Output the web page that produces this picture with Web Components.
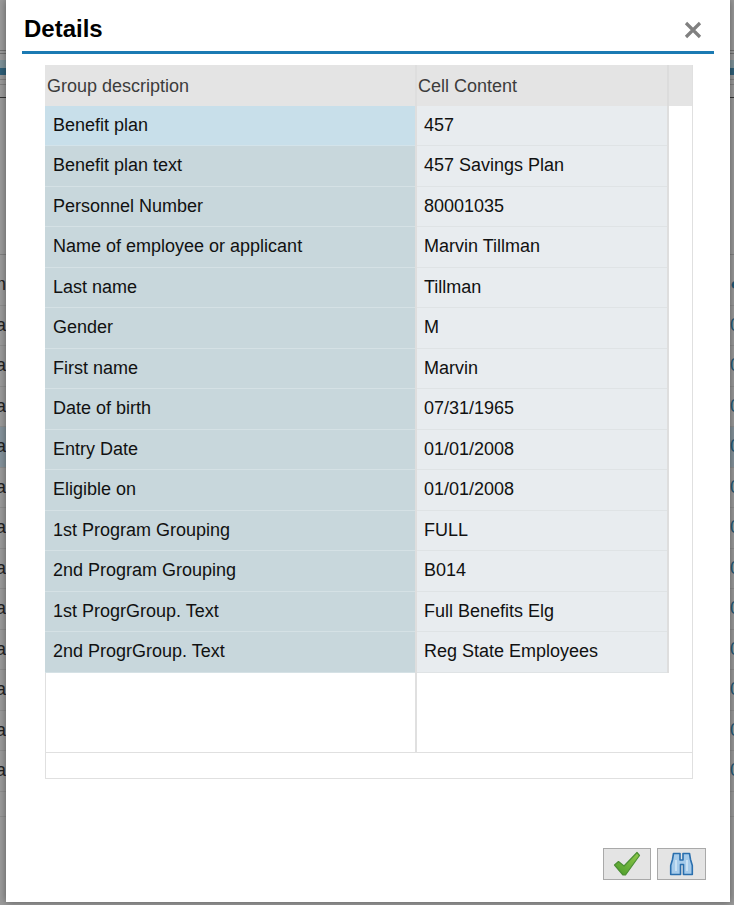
<!DOCTYPE html>
<html lang="en">
<head>
<meta charset="utf-8">
<title>Details</title>
<style>
  html, body {
    margin: 0;
    height: 905px;
    overflow: hidden;
    font-family: "Liberation Sans", Arial, sans-serif;
  }
</style>
</head>
<body>
<page-backdrop></page-backdrop>
<details-dialog heading="Details">
  <detail-table first="Group description" second="Cell Content">
    <detail-row label="Benefit plan" value="457" selected></detail-row>
    <detail-row label="Benefit plan text" value="457 Savings Plan"></detail-row>
    <detail-row label="Personnel Number" value="80001035"></detail-row>
    <detail-row label="Name of employee or applicant" value="Marvin Tillman"></detail-row>
    <detail-row label="Last name" value="Tillman"></detail-row>
    <detail-row label="Gender" value="M"></detail-row>
    <detail-row label="First name" value="Marvin"></detail-row>
    <detail-row label="Date of birth" value="07/31/1965"></detail-row>
    <detail-row label="Entry Date" value="01/01/2008"></detail-row>
    <detail-row label="Eligible on" value="01/01/2008"></detail-row>
    <detail-row label="1st Program Grouping" value="FULL"></detail-row>
    <detail-row label="2nd Program Grouping" value="B014"></detail-row>
    <detail-row label="1st ProgrGroup. Text" value="Full Benefits Elg"></detail-row>
    <detail-row label="2nd ProgrGroup. Text" value="Reg State Employees"></detail-row>
  </detail-table>
  <icon-button slot="actions" kind="check" title="OK"></icon-button>
  <icon-button slot="actions" kind="find" title="Find"></icon-button>
</details-dialog>

<script>
  // dimmed application behind the dialog, only its edges stay visible
  class PageBackdrop extends HTMLElement {
    constructor() {
      super();
      const shadowRoot = this.attachShadow({ mode: "open" });
      const letters = ["m", "a", "a", "a", "a", "a", "a", "a", "a", "a", "a", "a", "a"];
      const rows = letters.map((letter, i) => `
        <div class="row${i === 4 ? " row--active" : ""}">
          <span class="left">${letter}</span>
          <span class="right">${i === 0 ? "●" : "0"}</span>
        </div>`).join("");
      shadowRoot.innerHTML = `
      <style>
        :host {
          display: block;
          height: 905px;
          background: #9a9a9a;
          overflow: hidden;
        }
        .toolbar { height: 50px; }
        .line { height: 1px; background: #6f6f6f; margin-bottom: 2px; }
        .band { height: 8px; background: #7e9299; }
        .band--dark { height: 7px; background: #2f5f78; }
        .gap { height: 4px; }
        .thin { height: 1px; background: #808080; margin-bottom: 4px; }
        .black { height: 1px; background: #333; margin: 12px 0 156px; }
        .row {
          height: 40.5px;
          box-sizing: border-box;
          border-bottom: 1px solid #8d8d8d;
          display: flex;
          align-items: center;
          justify-content: space-between;
          font-size: 18px;
          color: #222;
        }
        .row--active { background: #84929b; }
        .row--end { height: 25px; }
        .left {
          width: 6px;
          display: flex;
          justify-content: flex-end;
          overflow: hidden;
        }
        .right {
          width: 4px;
          overflow: hidden;
          color: #1f5875;
        }
      </style>
      <div class="toolbar"></div>
      <div class="line"></div>
      <div class="line"></div>
      <div class="gap"></div>
      <div class="band"></div>
      <div class="band--dark"></div>
      <div class="gap"></div>
      <div class="thin"></div>
      <div class="thin"></div>
      <div class="black"></div>
      <div class="thin" style="margin-bottom:10px"></div>
      ${rows}
      <div class="row row--end"></div>
      `;
    }
  }

  class DetailsDialog extends HTMLElement {
    constructor() {
      super();
      const shadowRoot = this.attachShadow({ mode: "open" });
      shadowRoot.innerHTML = `
      <style>
        :host {
          position: absolute;
          top: 0;
          left: 6px;
          width: 724px;
          height: 902px;
          box-sizing: border-box;
          padding: 0 16px;
          background: #fff;
          box-shadow: 0 0 7px rgba(0, 0, 0, 0.4);
          display: flex;
          flex-direction: column;
        }
        header {
          height: 44px;
          flex: none;
          padding: 7px 12px 0 2px;
          border-bottom: 3px solid #1b7ab3;
          display: flex;
          align-items: center;
          justify-content: space-between;
        }
        h2 {
          margin: 0;
          font-size: 24px;
          line-height: 28px;
          font-weight: 700;
          color: #000;
        }
        .close { display: block; margin-top: 2px; }
        main {
          flex: none;
          padding: 11px 21px 0 23px;
        }
        footer {
          margin-top: 69px;
          display: flex;
          justify-content: flex-end;
          gap: 6px;
          padding-right: 8px;
        }
      </style>
      <header>
        <h2></h2>
        <svg class="close" width="18" height="18" viewBox="0 0 18 18" aria-label="Close">
          <path d="M2 2 16 16M16 2 2 16" stroke="#808080" stroke-width="3.2" fill="none"/>
        </svg>
      </header>
      <main><slot></slot></main>
      <footer><slot name="actions"></slot></footer>
      `;
      this.$titulo = shadowRoot.querySelector("h2");
    }

    connectedCallback() {
      this.$titulo.textContent = this.getAttribute("heading") || "";
    }
  }

  class DetailTable extends HTMLElement {
    constructor() {
      super();
      const shadowRoot = this.attachShadow({ mode: "open" });
      shadowRoot.innerHTML = `
      <style>
        :host {
          display: block;
          height: 714px;
          box-sizing: border-box;
          border: 1px solid #e0e0e0;
          border-top: 0;
          font-size: 18px;
        }
        .inner {
          margin-left: -1px;
          display: flex;
          flex-direction: column;
          height: 100%;
        }
        .head {
          height: 40.5px;
          flex: none;
          display: grid;
          grid-template-columns: 370px 252px 2px 1fr;
          background: #e4e4e4;
          color: #3c3c3c;
        }
        .head span {
          display: flex;
          align-items: center;
          padding: 2px 0 0 2px;
        }
        .head .second { border-left: 2px solid #dedede; padding-left: 1px; }
        .head .edge { background: #dcdcdc; padding: 0; }
        .filler {
          flex: 1;
          margin-left: 1px;
          display: grid;
          grid-template-columns: 369px 2px;
        }
        .filler i { grid-column: 2; background: #e0e0e0; }
        .foot {
          height: 25px;
          flex: none;
          margin-left: 1px;
          border-top: 1px solid #e0e0e0;
        }
      </style>
      <div class="inner">
        <div class="head">
          <span class="first"></span>
          <span class="second"></span>
          <span class="edge"></span>
          <span></span>
        </div>
        <slot></slot>
        <div class="filler"><i></i></div>
        <div class="foot"></div>
      </div>
      `;
      this.$first = shadowRoot.querySelector(".first");
      this.$second = shadowRoot.querySelector(".second");
    }

    connectedCallback() {
      this.$first.textContent = this.getAttribute("first");
      this.$second.textContent = this.getAttribute("second");
    }
  }

  class DetailRow extends HTMLElement {
    constructor() {
      super();
      const shadowRoot = this.attachShadow({ mode: "open" });
      shadowRoot.innerHTML = `
      <style>
        :host {
          display: grid;
          grid-template-columns: 370px 2px 250px 2px;
          width: 624px;
          height: 40.5px;
          color: #111;
        }
        span {
          display: flex;
          align-items: center;
          box-sizing: border-box;
          border-bottom: 1px solid transparent;
          white-space: nowrap;
        }
        .label {
          padding-left: 8px;
          background: #c8d7dc;
          border-bottom-color: #d5e1e5;
        }
        :host([selected]) .label {
          background: #c8dfea;
          border-bottom-color: #d3e3ea;
        }
        .sep, .edge { background: #dedede; }
        .value {
          padding-left: 7px;
          background: #e8ecef;
          border-bottom-color: #dfe3e5;
        }
      </style>
      <span class="label"></span>
      <span class="sep"></span>
      <span class="value"></span>
      <span class="edge"></span>
      `;
      this.$label = shadowRoot.querySelector(".label");
      this.$value = shadowRoot.querySelector(".value");
    }

    connectedCallback() {
      this.$label.textContent = this.getAttribute("label");
      this.$value.textContent = this.getAttribute("value");
    }
  }

  const ICONS = {
    check: `
      <svg width="28" height="26" viewBox="0 0 28 26">
        <defs>
          <linearGradient id="g" x1="0.9" y1="0" x2="0.2" y2="1">
            <stop offset="0" stop-color="#8fc74a"/>
            <stop offset="1" stop-color="#4f9f2c"/>
          </linearGradient>
        </defs>
        <path d="M1.5 14 5.5 10.5 11 15 24 1.5 26.5 4.5 12.5 24H10Z" fill="url(#g)" stroke="#4b8f33" stroke-width="1.2" stroke-linejoin="round"/>
      </svg>`,
    find: `
      <svg width="25" height="24" viewBox="0 0 25 24">
        <path d="M4.5 1.5h6.5v6.5h3V1.5h6.5l1 6 1.8 6v9h-8.8v-10h-3v10H1.7v-9l1.8-6z" fill="#a6cbea" stroke="#2a6fae" stroke-width="1.6" stroke-linejoin="round"/>
        <path d="M7 8v11M18 8v11" stroke="#c9e1f4" stroke-width="2" fill="none"/>
      </svg>`
  };

  class IconButton extends HTMLElement {
    constructor() {
      super();
      const shadowRoot = this.attachShadow({ mode: "open" });
      shadowRoot.innerHTML = `
      <style>
        :host {
          display: flex;
          align-items: center;
          justify-content: center;
          width: 49px;
          height: 32px;
          box-sizing: border-box;
          border: 1px solid #a9a9a9;
          background: #e4e4e4;
        }
        :host([kind="check"]) { width: 48px; }
      </style>
      <span id="icon" style="display:flex"></span>
      `;
      this.$icon = shadowRoot.querySelector("#icon");
    }

    connectedCallback() {
      this.$icon.innerHTML = ICONS[this.getAttribute("kind")] || "";
    }
  }

  customElements.define("page-backdrop", PageBackdrop);
  customElements.define("details-dialog", DetailsDialog);
  customElements.define("detail-table", DetailTable);
  customElements.define("detail-row", DetailRow);
  customElements.define("icon-button", IconButton);
</script>
</body>
</html>
